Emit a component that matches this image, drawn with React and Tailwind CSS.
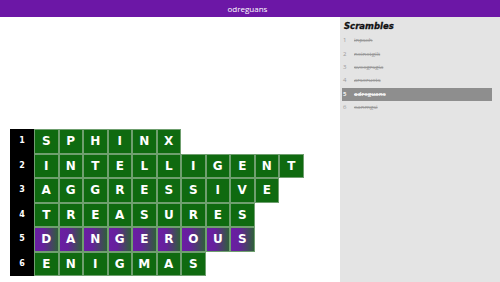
import React from 'react'

const words = ['SPHINX', 'INTELLIGENT', 'AGGRESSIVE', 'TREASURES', 'DANGEROUS', 'ENIGMAS']
const scrambles = ['inpsxh', 'neinetgilt', 'sveegrsgia', 'arseruets', 'odreguans', 'eanmgsi']
const current = 4

function Cell({ ch, hot }) {
    return (
        <div
            className={
                'w-[24.5px] h-[24.5px] flex items-center justify-center border border-[#6f9f6f] text-white font-bold text-[12px] ' +
                (hot
                    ? 'bg-[linear-gradient(to_right,#6a1ea3_0%,#66209c_35%,#2f5f3a_100%)]'
                    : 'bg-[#0f6a10]')
            }
        >
            {ch}
        </div>
    )
}

export default function App() {
    return (
        <div className="w-[500px] h-[282px] flex flex-col overflow-hidden bg-white font-['Open_Sans',sans-serif]">
            <header className="h-[17px] shrink-0 bg-[#6c17a6] flex items-center justify-center pr-[5px] text-white text-[8px]">
                odreguans
            </header>

            <div className="flex flex-1 min-h-0">
                <main className="flex-1 pl-[10px] pt-[112px]">
                    <div className="flex font-['DejaVu_Sans',sans-serif]">
                        <div className="w-[24px] bg-black flex flex-col">
                            {words.map((w, i) => (
                                <div
                                    key={w}
                                    className="h-[24.5px] flex items-center justify-center text-white font-bold text-[8px]"
                                >
                                    {i + 1}
                                </div>
                            ))}
                        </div>
                        <div className="flex flex-col">
                            {words.map((w, i) => (
                                <div key={w} className="flex">
                                    {w.split('').map((ch, j) => (
                                        <Cell key={j} ch={ch} hot={i === current} />
                                    ))}
                                </div>
                            ))}
                        </div>
                    </div>
                </main>

                <aside className="w-[160px] bg-[#e4e4e4] pt-[2px] pl-[2px] pr-[8px]">
                    <h2 className="pl-[2px] h-[14px] flex items-center text-[8.5px] font-black italic text-[#111] font-['DejaVu_Sans',sans-serif] [-webkit-text-stroke:0.3px_#111]">
                        Scrambles
                    </h2>
                    <ul className="mt-[1px]">
                        {scrambles.map((s, i) => (
                            <li
                                key={s}
                                className={
                                    'h-[13.4px] flex items-center text-[6px] ' +
                                    (i === current ? 'bg-[#8e8e8e] text-[#eeeeee] font-bold' : 'text-[#9a9a9a]')
                                }
                            >
                                <span className="w-[12px] pl-[1px]">{i + 1}</span>
                                <span className="line-through">{s}</span>
                            </li>
                        ))}
                    </ul>
                </aside>
            </div>
        </div>
    )
}
